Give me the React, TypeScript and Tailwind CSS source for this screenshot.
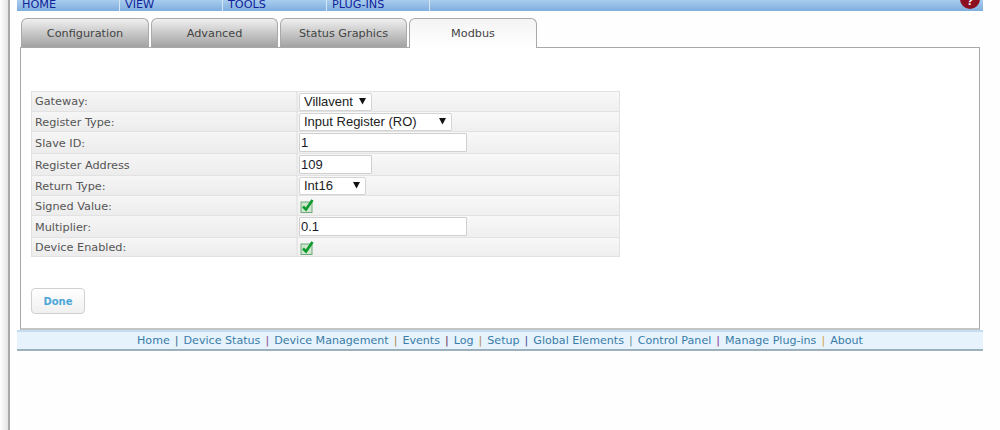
import React from 'react';

const labelFont = "font-['DejaVu_Sans',sans-serif] text-[11.25px]";
const fieldFont = "font-['Liberation_Sans',sans-serif] text-[13px]";

const navItems = [
  { label: 'HOME', width: 'w-[103px]' },
  { label: 'VIEW', width: 'w-[103px]' },
  { label: 'TOOLS', width: 'w-[104px]' },
  { label: 'PLUG-INS', width: 'w-[103px]' },
];

const tabs = [
  { label: 'Configuration', width: 'w-[128px]' },
  { label: 'Advanced', width: 'w-[127px]' },
  { label: 'Status Graphics', width: 'w-[127px]' },
];

const footerLinks = [
  { label: 'Home', bar: 'text-[#44708c]' },
  { label: 'Device Status', bar: 'text-[#8a4f8f]' },
  { label: 'Device Management', bar: 'text-[#b08a4c]' },
  { label: 'Events', bar: 'text-[#6a2a5a]' },
  { label: 'Log', bar: 'text-[#b08a4c]' },
  { label: 'Setup', bar: 'text-[#4a4f95]' },
  { label: 'Global Elements', bar: 'text-[#6f8f8f]' },
  { label: 'Control Panel', bar: 'text-[#8f2f8f]' },
  { label: 'Manage Plug-ins', bar: 'text-[#d0a040]' },
  { label: 'About', bar: '' },
];

const SelectBox = ({ value, width }: { value: string; width: string }) => (
  <div className={`flex ${width} h-[18px] items-center justify-between rounded-[2px] border border-[#d4d4d4] bg-white pl-[4px] pr-[5px] ${fieldFont} text-[#222]`}>
    <span>{value}</span>
    <svg width="7" height="7" viewBox="0 0 7 7">
      <path d="M0 0h7L3.5 6.5z" fill="#111" />
    </svg>
  </div>
);

const TextBox = ({ value, width }: { value: string; width: string }) => (
  <input
    readOnly
    value={value}
    className={`${width} h-[19px] rounded-[1px] border border-[#cfcfcf] bg-white px-[1px] ${fieldFont} text-[#1a1a2a] outline-none`}
  />
);

const CheckMark = ({ className = '' }: { className?: string }) => (
  <svg width="14" height="14" viewBox="0 0 14 14" className={`ml-[1px] ${className}`}>
    <rect x="1" y="3" width="11" height="10.5" fill="#cfe6cf" stroke="#6fa878" />
    <path d="M3 7.5l3 3L12.5 1" fill="none" stroke="#0c9a2c" strokeWidth="2.6" />
  </svg>
);

const rows: { label: string; height: string; pad: string; field: React.ReactNode }[] = [
  { label: 'Gateway:', height: 'h-[20px]', pad: 'pt-[1px]', field: <SelectBox value="Villavent" width="w-[73px]" /> },
  { label: 'Register Type:', height: 'h-[20px]', pad: 'pt-[3px]', field: <SelectBox value="Input Register (RO)" width="w-[153px]" /> },
  { label: 'Slave ID:', height: 'h-[22px]', pad: 'pt-[3px]', field: <TextBox value="1" width="w-[168px]" /> },
  { label: 'Register Address', height: 'h-[22px]', pad: 'pt-[3px]', field: <TextBox value="109" width="w-[73px]" /> },
  { label: 'Return Type:', height: 'h-[20px]', pad: 'pt-[3px]', field: <SelectBox value="Int16" width="w-[67px]" /> },
  { label: 'Signed Value:', height: 'h-[20px]', pad: 'pt-[3px]', field: <CheckMark /> },
  { label: 'Multiplier:', height: 'h-[22px]', pad: 'pt-[3px]', field: <TextBox value="0.1" width="w-[168px]" /> },
  { label: 'Device Enabled:', height: 'h-[18px]', pad: 'pt-[3px]', field: <CheckMark className="mt-[1px]" /> },
];

export default function App() {
  return (
    <div className="flex h-[430px] w-[1000px] overflow-hidden bg-[#fefefe]">
      <div className="h-full w-[10px] shrink-0 border-r-2 border-[#a9a9a9] bg-gradient-to-r from-[#ffffff] to-[#e4e4e4]" />

      <div className="ml-[7px] w-[966px]">
        <div className="relative flex h-[11px] w-full bg-gradient-to-b from-[#a9cdee] to-[#7eaede]">
          {navItems.map((item) => (
            <div key={item.label} className={`${item.width} relative h-full border-r border-[#d6e6f5]`}>
              <span className="absolute bottom-[-1px] left-[5px] font-['DejaVu_Sans',sans-serif] text-[11.25px] leading-[14px] text-[#10229a]">
                {item.label}
              </span>
            </div>
          ))}
          <div className="absolute right-[3px] top-[-11px] flex h-[20px] w-[20px] items-end justify-center rounded-full bg-[#8c1020] font-['Liberation_Sans',sans-serif] text-[12px] font-bold leading-[15px] text-white">
            ?
          </div>
        </div>

        <div className="mt-[7px] ml-[4px] flex h-[29px] gap-[2px]">
          {tabs.map((tab) => (
            <div
              key={tab.label}
              className={`flex h-[29px] ${tab.width} items-center justify-center rounded-t-[6px] border border-b-0 border-[#a9a9a9] bg-gradient-to-b from-[#f0f0f0] to-[#a2a2a2] pt-[2px] ${labelFont} text-[#444]`}
            >
              {tab.label}
            </div>
          ))}
          <div className={`relative z-10 flex h-[30px] w-[128px] items-center justify-center rounded-t-[6px] border border-b-0 border-[#a9a9a9] bg-gradient-to-b from-[#f4f4f4] to-[#ffffff] pt-[1px] ${labelFont} text-[#444]`}>
            Modbus
          </div>
        </div>

        <div className="ml-[3px] h-[283px] w-[960px] border border-[#a8a8a8] border-b-2 border-b-[#c4c4c4] bg-white pl-[10px] pt-[43px]">
          <div className="w-[589px] border border-[#e2e2e2]">
            {rows.map((row) => (
              <div key={row.label} className={`flex ${row.height} border-b border-[#e2e2e2] last:border-b-0`}>
                <div className={`flex w-[264px] items-center bg-gradient-to-b from-[#f6f6f6] to-[#ececec] pl-[3px] ${row.pad} ${labelFont} text-[#555]`}>
                  {row.label}
                </div>
                <div className="flex flex-1 items-center border-l-2 border-[#e8e8e8] bg-gradient-to-b from-[#f8f8f8] to-[#efefef] pl-[1px]">
                  {row.field}
                </div>
              </div>
            ))}
          </div>

          <button className="mt-[31px] flex h-[26px] w-[54px] items-center justify-center rounded-[4px] border border-[#d0d0d0] bg-gradient-to-b from-[#ffffff] to-[#f0f0f0] font-['DejaVu_Sans',sans-serif] text-[10px] font-bold text-[#4da6d8]">
            Done
          </button>
        </div>

        <div className="flex h-[21px] w-full items-center justify-center border-t-2 border-b-2 border-t-[#c4ddf2] border-b-[#9fb0bd] bg-[#e6f3fc] pt-[2px] font-['DejaVu_Sans',sans-serif] text-[11.1px] text-[#3a7ca8]">
          {footerLinks.map((link) => (
            <React.Fragment key={link.label}>
              <span>{link.label}</span>
              {link.bar && <span className={`mx-[5px] ${link.bar}`}>|</span>}
            </React.Fragment>
          ))}
        </div>
      </div>
    </div>
  );
}
